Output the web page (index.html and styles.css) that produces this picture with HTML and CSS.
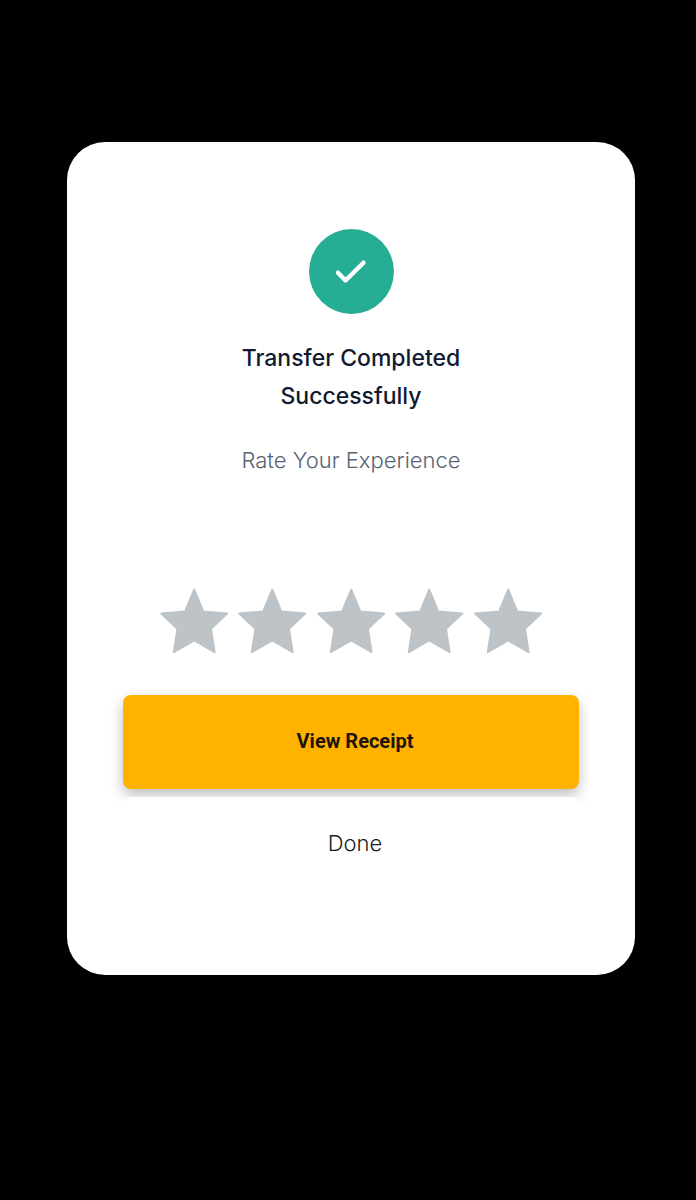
FILE: index.html
```html
<!DOCTYPE html>
<html lang="en">
<head>
<meta charset="utf-8">
<meta name="viewport" content="width=device-width, initial-scale=1">
<title>Transfer Completed</title>
<link rel="stylesheet" href="styles.css">
</head>
<body>
<svg class="sprite" aria-hidden="true">
  <symbol id="star" viewBox="0 0 68 66">
    <path d="M34 1.6 L43 23.4 L67 25.6 L50.8 40.8 L54.4 64.2 L34 52.4 L13.6 64.2 L17.2 40.8 L1 25.6 L25 23.4 Z"/>
  </symbol>
</svg>
<main class="card">
  <svg class="status" viewBox="0 0 85 85" aria-hidden="true">
    <circle class="status-disc" cx="42.5" cy="42.5" r="42.5"/>
    <path class="status-tick" d="M29 43.7 L36.5 51.5 L54.5 33.7"/>
  </svg>
  <h1 class="title">Transfer Completed Successfully</h1>
  <p class="prompt" id="prompt">Rate Your Experience</p>
  <div class="rating" role="radiogroup" aria-labelledby="prompt">
    <label class="star"><input type="radio" name="rating" value="1" aria-label="1 star"><svg class="star-icon"><use href="#star"/></svg></label>
    <label class="star"><input type="radio" name="rating" value="2" aria-label="2 stars"><svg class="star-icon"><use href="#star"/></svg></label>
    <label class="star"><input type="radio" name="rating" value="3" aria-label="3 stars"><svg class="star-icon"><use href="#star"/></svg></label>
    <label class="star"><input type="radio" name="rating" value="4" aria-label="4 stars"><svg class="star-icon"><use href="#star"/></svg></label>
    <label class="star"><input type="radio" name="rating" value="5" aria-label="5 stars"><svg class="star-icon"><use href="#star"/></svg></label>
  </div>
  <div class="actions">
    <button class="button primary" type="button">View Receipt</button>
    <button class="button secondary" type="button">Done</button>
  </div>
</main>
</body>
</html>
```
FILE: styles.css
```css
* {
  box-sizing: border-box;
}

body {
  margin: 0;
  padding: 142px 61px 142px 67px;
  background: #000;
  font-family: Inter, "Open Sans", sans-serif;
}

.sprite {
  position: absolute;
  width: 0;
  height: 0;
}

.card {
  display: flex;
  flex-direction: column;
  align-items: center;
  padding: 87px 56px 84px;
  border-radius: 38px;
  background: #fff;
}

.status {
  width: 85px;
  height: 85px;
}

.status-disc {
  fill: #26ae94;
}

.status-tick {
  fill: none;
  stroke: #fff;
  stroke-width: 4.4;
  stroke-linecap: round;
  stroke-linejoin: round;
}

.title {
  max-width: 280px;
  margin: 25px 0 0;
  color: #101a30;
  font-size: 23px;
  font-weight: 500;
  line-height: 38px;
  text-align: center;
}

.prompt {
  margin: 26px 0 0;
  color: #566372;
  font-size: 22px;
  font-weight: 300;
  line-height: 38px;
}

.rating {
  display: grid;
  grid-template-columns: repeat(5, 1fr);
  gap: 10px;
  width: 100%;
  max-width: 382px;
  margin-top: 109px;
}

.star {
  position: relative;
  display: block;
  cursor: pointer;
}

.star input {
  position: absolute;
  inset: 0;
  width: 100%;
  height: 100%;
  margin: 0;
  opacity: 0;
}

.star-icon {
  display: block;
  width: 100%;
  height: 66px;
  fill: #bdc3c7;
  stroke: #bdc3c7;
  stroke-width: 2;
  stroke-linejoin: round;
}

.actions {
  display: flex;
  flex-direction: column;
  gap: 8px;
  width: 100%;
  margin-top: 41px;
}

.button {
  width: 100%;
  height: 94px;
  padding: 0 0 3px 8px;
  border: 0;
  border-radius: 8px;
  cursor: pointer;
}

.primary {
  background: #ffb300;
  box-shadow: 0 6px 14px rgba(0, 0, 0, 0.26);
  color: #201508;
  font-family: Roboto, sans-serif;
  font-size: 20px;
  font-weight: 700;
}

.secondary {
  position: relative;
  background: #fff;
  color: #1c1c1e;
  font-family: inherit;
  font-size: 22px;
  font-weight: 300;
}
```
